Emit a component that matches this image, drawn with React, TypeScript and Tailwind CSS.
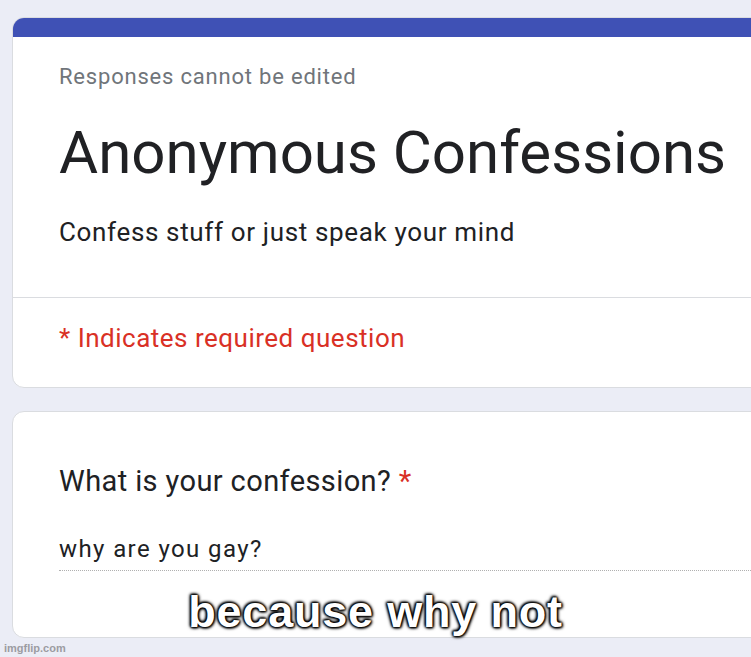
export default function App() {
  return (
    <div className="relative w-[751px] h-[657px] overflow-hidden bg-[#ebedf6] font-['Roboto',sans-serif]">
      <div className="pt-[17px] pl-[12px]">
        {/* header card */}
        <div className="w-[790px] rounded-[12px] border border-[#dadce0] bg-white overflow-hidden">
          <div className="h-[19px] bg-[#3f51b5]" />
          <div className="pl-[46px] pt-[28px] pb-[50px] border-b border-[#dadce0]">
            <div className="text-[22px] leading-[24px] tracking-[0.8px] text-[#70757a]">Responses cannot be edited</div>
            <div className="mt-[28px] text-[60px] leading-[72px] text-[#202124]">Anonymous Confessions</div>
            <div className="mt-[28px] text-[26px] leading-[30px] tracking-[0.65px] text-[#202124]">Confess stuff or just speak your mind</div>
          </div>
          <div className="pl-[46px] pt-[26px] pb-[34px]">
            <div className="text-[26px] leading-[29px] tracking-[0.5px] text-[#d93025]">* Indicates required question</div>
          </div>
        </div>

        {/* question card */}
        <div className="mt-[23px] w-[790px] rounded-[12px] border border-[#dadce0] bg-white pl-[46px] pt-[53px] pb-[66px]">
          <div className="text-[29px] leading-[32px] tracking-[0.4px] text-[#202124]">
            What is your confession? <span className="text-[#d93025]">*</span>
          </div>
          <div className="mt-[39px] pb-[8px] border-b border-dotted border-[#b0b0b0]">
            <div className="text-[24px] leading-[26px] tracking-[1.4px] text-[#202124]">why are you gay?</div>
          </div>
        </div>
      </div>

      {/* meme caption */}
      <div className="absolute left-0 right-0 top-[589px] text-center font-['Liberation_Sans',Arial,sans-serif] font-bold text-[45px] leading-[45px] tracking-[0.8px] text-white [text-shadow:0_0_2px_#000,0_0_2px_#000,0_0_3px_#000,0_0_4px_#000,1px_1px_3px_#000,-1px_-1px_3px_#000]">
        because why not
      </div>

      <div className="absolute left-[4px] top-[641px] font-['Liberation_Sans',Arial,sans-serif] font-bold text-[11px] leading-[14px] text-[#9c9ca2]">
        imgflip.com
      </div>
    </div>
  );
}
